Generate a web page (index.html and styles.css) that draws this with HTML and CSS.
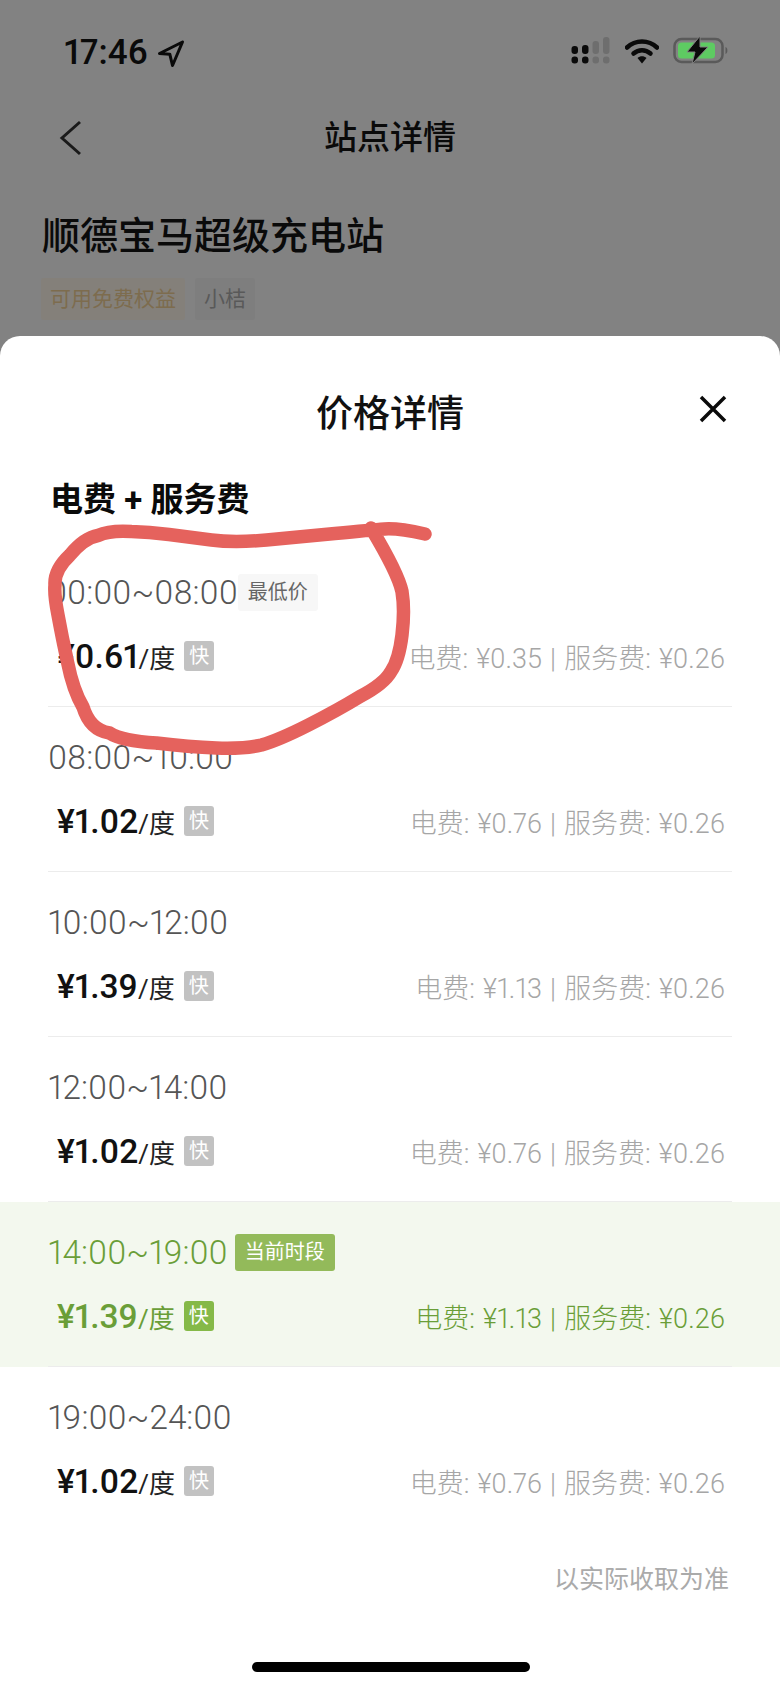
FILE: index.html
```html
<!DOCTYPE html>
<html lang="zh-CN">

<head>
  <meta charset="UTF-8">
  <meta name="viewport" content="width=device-width, initial-scale=1.0">
  <title>价格详情</title>
  <link rel="stylesheet" href="styles.css">
</head>

<body>
  <div class="page">
    <div class="behind">
      <div class="status">
        <div class="clock">
          <span>17:46</span>
          <svg class="arrow" width="28" height="28" viewBox="0 0 28 28">
            <path d="M25.5 2 L2.5 13.5 L12.8 14.2 L15.5 25.5 Z" fill="none" stroke="#0a0a0a" stroke-width="3" stroke-linejoin="round" />
          </svg>
        </div>
        <div class="status-icons">
          <svg width="40" height="28" viewBox="0 0 40 28">
            <rect x="0.5" y="10" width="6.5" height="8" rx="3" fill="#0a0a0a" />
            <rect x="11" y="9" width="6.5" height="9" rx="3" fill="#0a0a0a" />
            <rect x="21.5" y="5" width="6.5" height="13" rx="3" fill="#6e6e6e" />
            <rect x="32" y="1" width="6.5" height="17" rx="3" fill="#6e6e6e" />
            <rect x="0.5" y="20.500" width="6.5" height="7" rx="3" fill="#0a0a0a" />
            <rect x="11" y="20.500" width="6.5" height="7" rx="3" fill="#0a0a0a" />
            <rect x="21.5" y="20.500" width="6.5" height="7" rx="3" fill="#6e6e6e" />
            <rect x="32" y="20.500" width="6.5" height="7" rx="3" fill="#6e6e6e" />
          </svg>
          <svg class="wifi" width="34" height="26" viewBox="0 0 34 26">
            <path d="M2 9.500 C10.500 1.500 23.500 1.500 32 9.500" fill="none" stroke="#0a0a0a" stroke-width="4.500" stroke-linecap="round" />
            <path d="M8.500 15.500 C13.500 11 20.500 11 25.500 15.500" fill="none" stroke="#0a0a0a" stroke-width="4.500" stroke-linecap="round" />
            <path d="M12.500 20 L17 25.500 L21.500 20 C19 17.800 15 17.800 12.500 20 Z" fill="#0a0a0a" />
          </svg>
          <svg class="battery" width="56" height="28" viewBox="0 0 56 28">
            <rect x="1.500" y="3" width="48" height="23" rx="7" fill="none" stroke="#5a5a5a" stroke-width="2.500" />
            <rect x="5" y="6.500" width="37" height="16" rx="3.500" fill="#5ecb62" />
            <path d="M52.500 11 C55 11.500 55 17.500 52.500 18 Z" fill="#5a5a5a" />
            <path d="M27 0 L14 16 L22 16 L19 28 L35 11 L27 11 Z" fill="#0a0a0a" stroke="#828282" stroke-width="1" />
          </svg>
        </div>
      </div>
      <div class="nav">
        <svg class="back" width="24" height="36" viewBox="0 0 24 36">
          <path d="M21 2 L3 18 L21 34" fill="none" stroke="#1a1a1a" stroke-width="3" />
        </svg>
        <div class="nav-title">站点详情</div>
      </div>
      <h1 class="station">顺德宝马超级充电站</h1>
      <div class="tags">
        <span class="tag tag-gold">可用免费权益</span>
        <span class="tag tag-gray">小桔</span>
      </div>
    </div>

    <div class="sheet">
      <div class="sheet-head">
        <div class="sheet-title">价格详情</div>
        <svg class="close" width="28" height="28" viewBox="0 0 28 28">
          <path d="M2 2 L26 26 M26 2 L2 26" fill="none" stroke="#0a0a0a" stroke-width="3.500" />
        </svg>
      </div>
      <div class="section">电费 + 服务费</div>

      <div class="row">
        <div class="row-in">
          <div class="time">00:00~08:00<span class="badge">最低价</span></div>
          <div class="price-line">
            <div class="price"><b>¥0.61</b>/度<span class="kuai">快</span></div>
            <div class="fee">电费: ¥0.35 | 服务费: ¥0.26</div>
          </div>
        </div>
      </div>
      <div class="row">
        <div class="row-in">
          <div class="time">08:00~10:00</div>
          <div class="price-line">
            <div class="price"><b>¥1.02</b>/度<span class="kuai">快</span></div>
            <div class="fee">电费: ¥0.76 | 服务费: ¥0.26</div>
          </div>
        </div>
      </div>
      <div class="row">
        <div class="row-in">
          <div class="time">10:00~12:00</div>
          <div class="price-line">
            <div class="price"><b>¥1.39</b>/度<span class="kuai">快</span></div>
            <div class="fee">电费: ¥1.13 | 服务费: ¥0.26</div>
          </div>
        </div>
      </div>
      <div class="row">
        <div class="row-in">
          <div class="time">12:00~14:00</div>
          <div class="price-line">
            <div class="price"><b>¥1.02</b>/度<span class="kuai">快</span></div>
            <div class="fee">电费: ¥0.76 | 服务费: ¥0.26</div>
          </div>
        </div>
      </div>
      <div class="row row-now">
        <div class="row-in">
          <div class="time">14:00~19:00<span class="badge badge-now">当前时段</span></div>
          <div class="price-line">
            <div class="price"><b>¥1.39</b>/度<span class="kuai">快</span></div>
            <div class="fee">电费: ¥1.13 | 服务费: ¥0.26</div>
          </div>
        </div>
      </div>
      <div class="row row-last">
        <div class="row-in">
          <div class="time">19:00~24:00</div>
          <div class="price-line">
            <div class="price"><b>¥1.02</b>/度<span class="kuai">快</span></div>
            <div class="fee">电费: ¥0.76 | 服务费: ¥0.26</div>
          </div>
        </div>
      </div>

      <div class="note">以实际收取为准</div>
      <div class="home-bar"></div>
    </div>

    <!-- red pen circle drawn over the first row -->
    <svg class="ink" width="780" height="1688" viewBox="0 0 780 1688">
      <path d="M425 534 Q398 528 384.500 529 Q371 530 335 533.500 Q299 537 266.500 540 Q234 543 211.500 540 Q189 537 169 534.500 Q149 532 131.500 531.500 Q110 530 98 535.500 Q84 538 70 555 Q54 570 55 585 Q54 595 58 615 Q62 637 67.500 662 Q73 690 83 707 Q90 730 109.500 733 Q122 741 156.500 743 Q189 747 216.500 748 Q244 749 261.500 745 Q279 740 308.500 725 Q338 710 360 696.500 Q384 684 391 671.500 Q399 660 402 635 Q405 610 402 591.500 Q398 573 371 528" fill="none" stroke="#e5625d" stroke-width="13.500" stroke-linecap="round" stroke-linejoin="round" />
    </svg>
  </div>
</body>

</html>
```

FILE: styles.css
```css
* {
  box-sizing: border-box;
}

body {
  margin: 0;
  font-family: Roboto, "Noto Sans CJK SC", sans-serif;
  font-variant-numeric: proportional-nums;
  background: #828282;
}

.page {
  position: relative;
  width: 780px;
  height: 1688px;
  overflow: hidden;
}

/* page behind the sheet */
.behind {
  height: 336px;
  background: #828282;
  color: #0a0a0a;
}

.status {
  height: 86px;
  padding: 36px 51px 0 64px;
  display: flex;
  justify-content: space-between;
}

.clock {
  display: flex;
  align-items: center;
  height: 32px;
  font-size: 35px;
  font-weight: 500;
}

.arrow {
  margin-left: 9px;
  margin-top: 4px;
}

.status-icons {
  display: flex;
  align-items: flex-start;
}

.wifi {
  margin-left: 14px;
  margin-top: 2px;
}

.battery {
  margin-left: 14px;
}

.nav {
  position: relative;
  height: 104px;
  display: flex;
  align-items: center;
  justify-content: center;
}

.back {
  position: absolute;
  left: 59px;
  top: 34px;
}

.nav-title {
  font-size: 33px;
  font-weight: 500;
  margin-bottom: 6px;
}

.station {
  margin: 0;
  padding-left: 42px;
  font-size: 38px;
  font-weight: 500;
  line-height: 50px;
  height: 88px;
  padding-top: 21px;
}

.tags {
  display: flex;
  padding-left: 41px;
  gap: 10px;
}

.tag {
  height: 42px;
  line-height: 42px;
  padding: 0 9px;
  font-size: 21px;
  border-radius: 3px;
}

.tag-gold {
  background: #84807a;
  color: #7d6c4e;
}

.tag-gray {
  background: #7e7e7e;
  color: #595959;
}

/* price sheet */
.sheet {
  height: 1352px;
  background: #fff;
  border-radius: 20px 20px 0 0;
}

.sheet-head {
  position: relative;
  height: 108px;
  padding-top: 52px;
  text-align: center;
}

.sheet-title {
  font-size: 37px;
  font-weight: 500;
  line-height: 54px;
  color: #111;
}

.close {
  position: absolute;
  right: 53px;
  top: 59px;
}

.section {
  height: 98px;
  padding: 34px 0 0 50px;
  font-size: 33px;
  font-weight: 700;
  line-height: 44px;
  color: #0a0a0a;
}

.row {
  height: 165px;
  padding: 0 48px;
}

.row-in {
  height: 165px;
  padding-top: 30px;
  border-bottom: 1px solid #ececec;
}

.row-last .row-in {
  border-bottom: 0;
}

.time {
  display: flex;
  align-items: center;
  height: 40px;
  font-size: 33.300px;
  font-weight: 300;
  color: #555;
}

.badge {
  height: 37px;
  line-height: 37px;
  padding: 0 10px;
  font-size: 20px;
  font-weight: 400;
  color: #666;
  background: #f7f7f7;
  border-radius: 3px;
}

.price-line {
  display: flex;
  align-items: center;
  justify-content: space-between;
  height: 44px;
  margin-top: 22px;
  padding: 0 7px 0 9px;
}

.price {
  display: flex;
  align-items: center;
  font-size: 26px;
  color: #222;
}

.price b {
  font-size: 33.500px;
  font-weight: 500;
  color: #111;
}

.kuai {
  width: 30px;
  height: 30px;
  line-height: 30px;
  margin-left: 9px;
  text-align: center;
  font-size: 20px;
  color: #fff;
  background: #c2c2c2;
  border-radius: 3px;
}

.fee {
  font-size: 27px;
  font-weight: 300;
  word-spacing: 1.500px;
  color: #a6a6a6;
}

/* current period */
.row-now {
  background: #f3f8ee;
}

.row-now .time,
.row-now .price,
.row-now .price b,
.row-now .fee {
  color: #6a9e38;
}

.badge-now {
  margin-left: 7px;
  color: #fff;
  background: #93ba5a;
}

.row-now .kuai {
  background: #85b948;
}

.note {
  padding: 30px 51px 0 0;
  text-align: right;
  font-size: 25px;
  line-height: 36px;
  color: #aaa;
}

.home-bar {
  width: 278px;
  height: 10px;
  margin: 64px 0 0 252px;
  background: #000;
  border-radius: 5px;
}

.ink {
  position: absolute;
  left: 0;
  top: 0;
  pointer-events: none;
}
```
